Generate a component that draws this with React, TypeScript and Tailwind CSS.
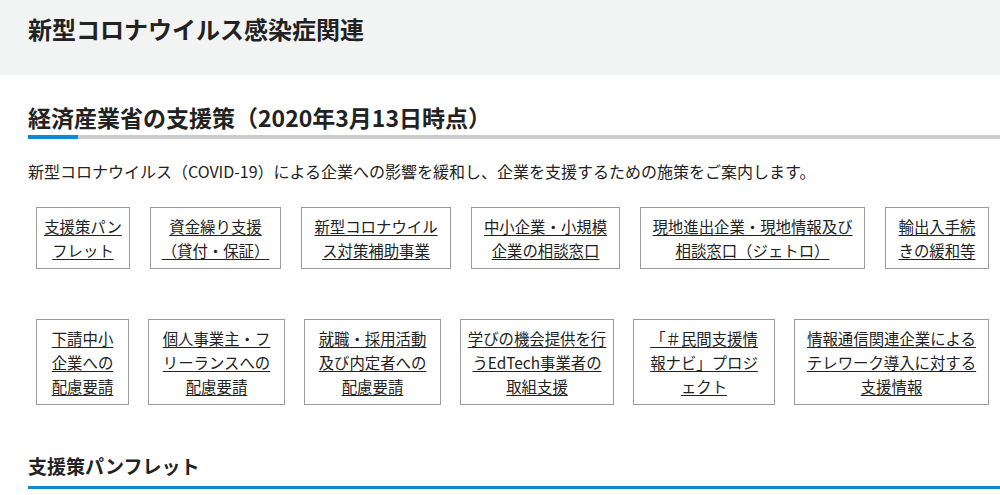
import React from "react";

type Item = { lines: string[]; w: string };

const rowOne: Item[] = [
  { lines: ["支援策パン", "フレット"], w: "w-[94px]" },
  { lines: ["資金繰り支援", "（貸付・保証）"], w: "w-[131px]" },
  { lines: ["新型コロナウイル", "ス対策補助事業"], w: "w-[150px]" },
  { lines: ["中小企業・小規模", "企業の相談窓口"], w: "w-[149px]" },
  { lines: ["現地進出企業・現地情報及び", "相談窓口（ジェトロ）"], w: "w-[225px]" },
  { lines: ["輸出入手続", "きの緩和等"], w: "w-[104px]" },
];

const rowTwo: Item[] = [
  { lines: ["下請中小", "企業への", "配慮要請"], w: "w-[93px]" },
  { lines: ["個人事業主・フ", "リーランスへの", "配慮要請"], w: "w-[137px]" },
  { lines: ["就職・採用活動", "及び内定者への", "配慮要請"], w: "w-[137px]" },
  { lines: ["学びの機会提供を行", "うEdTech事業者の", "取組支援"], w: "w-[154px]" },
  { lines: ["「＃民間支援情", "報ナビ」プロジ", "ェクト"], w: "w-[142px]" },
  { lines: ["情報通信関連企業による", "テレワーク導入に対する", "支援情報"], w: "w-[195px]" },
];

function LinkBox({ item }: { item: Item }) {
  return (
    <li className={`${item.w} shrink-0 border border-[#9a9a9a] bg-white py-[6px] text-center`}>
      <a href="#" className="text-[15.4px] leading-6 text-[#222] underline underline-offset-2 whitespace-nowrap">
        {item.lines.map((line, i) => (
          <React.Fragment key={i}>
            {line}
            {i < item.lines.length - 1 && <br />}
          </React.Fragment>
        ))}
      </a>
    </li>
  );
}

export default function App() {
  return (
    <div
      className="min-h-[495px] overflow-hidden bg-white text-[#222]"
      style={{ fontFamily: '"Noto Sans CJK JP", "Noto Sans", sans-serif' }}
    >
      {/* page title band */}
      <header className="h-[75px] bg-[#f2f4f4] px-[28px] pt-[13px]">
        <h1 className="text-[24px] font-bold leading-8">新型コロナウイルス感染症関連</h1>
      </header>

      <section className="pl-[28px]">
        <h2 className="mt-[27px] text-[23px] font-bold leading-[31px]">
          経済産業省の支援策（2020年3月13日時点）
        </h2>
        <div className="mt-[2px] flex h-[4px]">
          <div className="w-[50px] bg-[#0b8bd0]" />
          <div className="flex-1 bg-[#cccccc]" />
        </div>

        <p className="mt-[20px] text-[16px] leading-6">
          新型コロナウイルス（COVID-19）による企業への影響を緩和し、企業を支援するための施策をご案内します。
        </p>

        <div className="mt-[24px] flex flex-col gap-[50px] pl-[8px]">
          <ul className="flex items-start gap-[20px]">
            {rowOne.map((item, i) => (
              <LinkBox key={i} item={item} />
            ))}
          </ul>
          <ul className="flex items-start gap-[19px]">
            {rowTwo.map((item, i) => (
              <LinkBox key={i} item={item} />
            ))}
          </ul>
        </div>

        <h3 className="mt-[47px] text-[19px] font-bold leading-7">支援策パンフレット</h3>
        <div className="mt-[6px] h-[3px] bg-[#0b8bd0]" />
      </section>
    </div>
  );
}
